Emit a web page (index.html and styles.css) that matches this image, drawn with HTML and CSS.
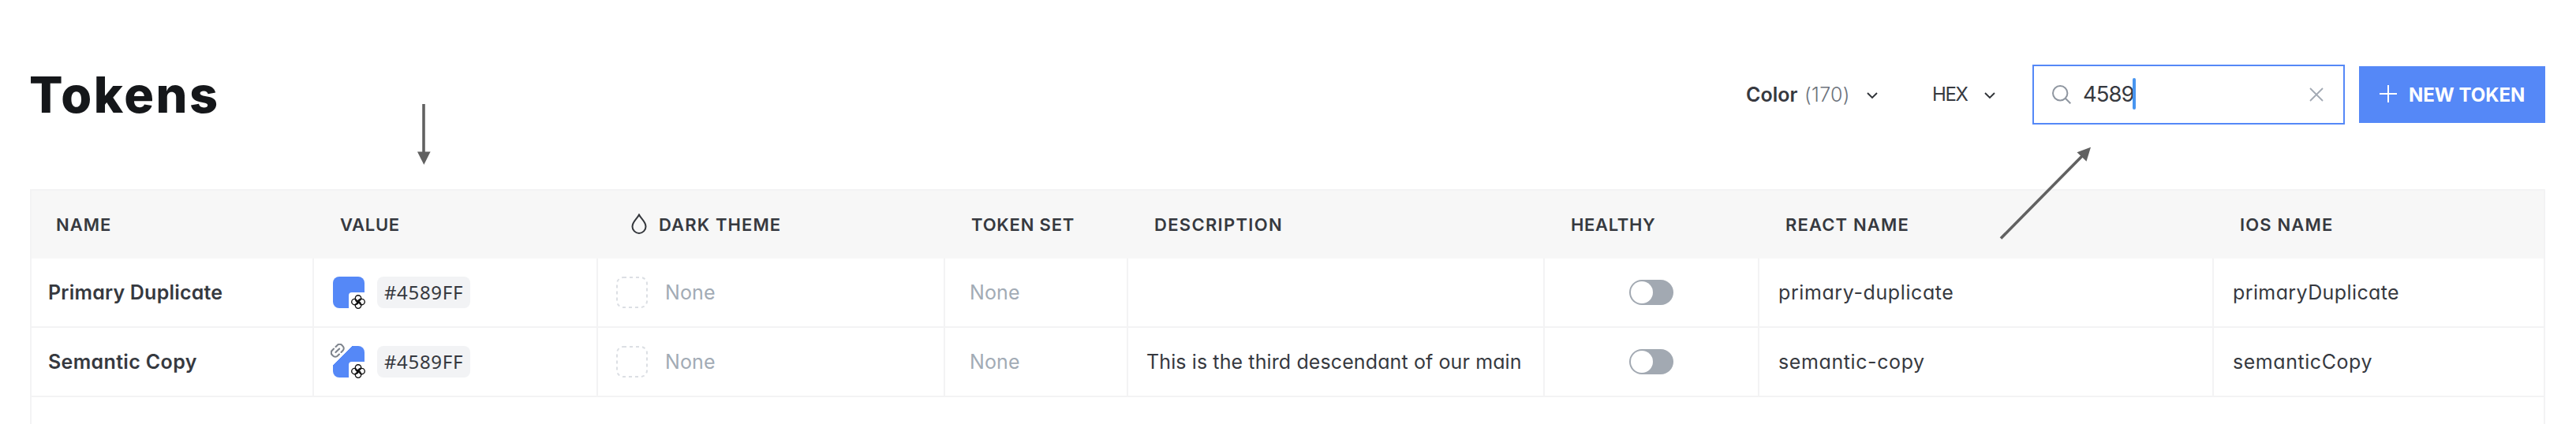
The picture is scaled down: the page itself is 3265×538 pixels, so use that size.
FILE: index.html
```html
<!DOCTYPE html>
<html lang="en">
<head>
<meta charset="utf-8">
<title>Tokens</title>
<link rel="stylesheet" href="styles.css">
</head>
<body>
<svg class="defs" width="0" height="0" aria-hidden="true">
  <symbol id="chevron" viewBox="0 0 16 10"><path d="M2 2 8 8l6-6" fill="none" stroke="#2f3237" stroke-width="1.900"/></symbol>
  <symbol id="flower" viewBox="0 0 18 18">
    <g fill="none" stroke="#111" stroke-width="1.350">
      <path id="petal" d="M10.500 10.300C7 9.500 5.200 7.200 5.300 4.400a3.700 3.700 0 0 1 7.400 0C12.700 6.300 11.200 7.300 9.500 7.700"/>
      <use href="#petal" transform="rotate(90 9 9)"/>
      <use href="#petal" transform="rotate(180 9 9)"/>
      <use href="#petal" transform="rotate(270 9 9)"/>
    </g>
  </symbol>
  <symbol id="none-box" viewBox="0 0 40 40"><rect x="1" y="1" width="38" height="38" rx="8" fill="none" stroke="#dcdfe4" stroke-width="2" stroke-dasharray="4 4"/></symbol>
</svg>

<main class="page">
  <header class="toolbar">
    <h1 class="title">Tokens</h1>
    <div class="select select-type"><b class="type">Color</b><span class="count">(170)</span><svg class="chevron"><use href="#chevron"/></svg></div>
    <div class="select select-format"><span class="format">HEX</span><svg class="chevron"><use href="#chevron"/></svg></div>
    <div class="search">
      <svg class="search-icon" viewBox="0 0 24 24"><g fill="none" stroke="#8f96a0" stroke-width="2"><circle cx="10.200" cy="10.200" r="9.200"/><path d="M16.800 16.800 23.300 23.300"/></g></svg>
      <span class="query">4589</span><i class="caret"></i>
      <svg class="clear" viewBox="0 0 18 18"><path d="M1 1 17 17M17 1 1 17" stroke="#a2a9b3" stroke-width="1.800"/></svg>
    </div>
    <div class="button">
      <svg class="plus" viewBox="0 0 22 22"><path d="M11 0v22M0 11h22" stroke="#fff" stroke-width="2"/></svg>
      <span>NEW TOKEN</span>
    </div>
  </header>

  <section class="table">
    <div class="row head">
      <div class="cell"><span class="h-name">NAME</span></div>
      <div class="cell"><span class="h-value">VALUE</span></div>
      <div class="cell dark"><svg class="drop" viewBox="0 0 20 26"><path d="M10 1.500C7.400 6.800 1.500 10.500 1.500 16.400a8.500 8.500 0 0 0 17 0C18.500 10.500 12.600 6.800 10 1.500Z" fill="none" stroke="#34373c" stroke-width="2"/></svg><span class="h-dark">DARK THEME</span></div>
      <div class="cell"><span class="h-set">TOKEN SET</span></div>
      <div class="cell"><span class="h-desc">DESCRIPTION</span></div>
      <div class="cell"><span class="h-healthy">HEALTHY</span></div>
      <div class="cell"><span class="h-react">REACT NAME</span></div>
      <div class="cell"><span class="h-ios">IOS NAME</span></div>
    </div>
    <div class="row">
      <div class="cell name"><span>Primary Duplicate</span></div>
      <div class="cell"><div class="swatch"><i class="notch"></i><svg class="flower"><use href="#flower"/></svg></div><span class="chip">#4589FF</span></div>
      <div class="cell"><svg class="none-box"><use href="#none-box"/></svg><span class="none">None</span></div>
      <div class="cell set"><span class="none">None</span></div>
      <div class="cell desc"></div>
      <div class="cell healthy"><span class="toggle"></span></div>
      <div class="cell react"><span>primary-duplicate</span></div>
      <div class="cell ios"><span>primaryDuplicate</span></div>
    </div>
    <div class="row">
      <div class="cell name copy"><span>Semantic Copy</span></div>
      <div class="cell"><div class="swatch linked"><i class="notch"></i><svg class="flower"><use href="#flower"/></svg>
        <svg class="link" viewBox="0 0 24 24"><g fill="none" stroke="#7d838c" stroke-width="2.800" stroke-linecap="round"><path d="m9 5.500 2.500-2.500a5.600 5.600 0 0 1 8.500 0l1 1a5.600 5.600 0 0 1 0 8.500L18.500 15"/><path d="M5.500 9 3 11.500a5.600 5.600 0 0 0 0 8.500l1 1a5.600 5.600 0 0 0 8.500 0L15 18.500"/><path d="m8.800 15.200 6.400-6.400"/></g></svg></div><span class="chip">#4589FF</span></div>
      <div class="cell"><svg class="none-box"><use href="#none-box"/></svg><span class="none">None</span></div>
      <div class="cell set"><span class="none">None</span></div>
      <div class="cell desc"><span>This is the third descendant of our main</span></div>
      <div class="cell healthy"><span class="toggle"></span></div>
      <div class="cell react copy"><span>semantic-copy</span></div>
      <div class="cell ios copy"><span>semanticCopy</span></div>
    </div>
  </section>
</main>

<svg class="annotations" viewBox="0 0 3265 538">
  <g stroke="#616161" fill="#616161">
    <path d="M537 132V194" stroke-width="3.600"/>
    <path d="M529 192.500h16.600L537.300 209Z" stroke="none"/>
    <path d="M2536 302.500 2641 196" stroke-width="3.600"/>
    <path d="M2632.500 193.300 2650 186.700 2644.500 204.700Z" stroke="none"/>
  </g>
</svg>
</body>
</html>
```
FILE: styles.css
```css
* { box-sizing: border-box; }

body {
  margin: 0;
  height: 538px;
  overflow: hidden;
  background: #fff;
  color: #36393f;
  font-family: Inter, "Liberation Sans", sans-serif;
  font-size: 25px;
  font-feature-settings: "cv11";
  white-space: nowrap;
}

.defs { position: absolute; }

svg, i { display: block; flex: none; }

.page {
  display: flex;
  flex-direction: column;
  height: 538px;
  padding: 0 39px 0 38px;
}

/* Toolbar */
.toolbar {
  display: flex;
  align-items: center;
  height: 240px;
}

.title {
  margin: 0 auto 0 -1px;
  color: #15171a;
  font-size: 63px;
  font-weight: 800;
  line-height: 80px;
  letter-spacing: 2.500px;
}

.select { display: flex; align-items: center; margin-top: -1px; }
.select-type { width: 236px; }
.select-format { width: 127px; }
.type { width: 74px; font-weight: 600; letter-spacing: 0; }
.count { width: 78px; color: #6d737c; font-weight: 300; letter-spacing: 0.300px; }
.format { width: 65px; font-size: 24px; font-weight: 400; letter-spacing: -1.400px; }
.chevron { width: 16px; height: 10px; margin-top: 3px; }

.search {
  display: flex;
  align-items: center;
  width: 396px;
  height: 76px;
  margin-right: 18px;
  padding: 0 25px 0 23px;
  border: 2px solid #5588f7;
}

.search-icon { width: 24px; height: 24px; }
.query { width: 63px; margin: -3px 0 0 15px; font-size: 27.500px; letter-spacing: -1px; line-height: 40px; }
.caret { width: 4px; height: 40px; border-radius: 2px; background: #4895f0; margin-top: -2px; }
.clear { width: 18px; height: 18px; margin-left: auto; }

.button {
  display: flex;
  align-items: center;
  width: 236px;
  height: 72px;
  padding-left: 26px;
  background: #5588f7;
  color: #fff;
  font-size: 24px;
  font-weight: 700;
}

.plus { width: 22px; height: 22px; margin: -2px 15px 0 0; }

/* Table */
.table {
  flex: 1;
  border: 2px solid #f3f3f4;
  border-bottom: 0;
}

.row {
  display: grid;
  grid-template-columns: 358px 360px 440px 232px 528px 272px 576px 418px;
  height: 88px;
  border-bottom: 2px solid #f3f3f4;
}

.cell {
  display: flex;
  align-items: center;
  min-width: 0;
  padding-left: 24px;
  border-right: 2px solid #f3f3f4;
}

.cell:last-child { border-right: 0; }
.cell > span:not(.toggle):not(.chip) { margin-top: -1px; }

.head {
  height: 86px;
  border: 0;
  background: #f7f7f7;
  font-size: 22px;
  font-weight: 600;
}

.head .cell { padding-left: 33px; border: 0; }
.head .cell:first-child { padding-left: 31px; }
.head .dark { padding-left: 42px; }
.drop { width: 20px; height: 26px; margin-right: 15px; margin-top: -2px; }

.h-name { letter-spacing: 1px; }
.h-value { letter-spacing: 0.700px; }
.h-dark { letter-spacing: 1.100px; }
.h-set { letter-spacing: 0.800px; }
.h-desc { letter-spacing: 1.300px; }
.h-healthy { letter-spacing: 0.650px; }
.h-react { letter-spacing: 1.150px; }
.h-ios { letter-spacing: 1.150px; }

.name { padding-left: 21px; font-weight: 600; letter-spacing: 0.200px; }
.name.copy { letter-spacing: 0.350px; }
.set { padding-left: 31px; }
.none { color: #a2abb5; letter-spacing: 0.100px; }
.desc { padding-left: 23px; letter-spacing: 0.110px; }
.healthy { justify-content: center; padding: 0; }
.react { letter-spacing: 0.600px; }
.ios { letter-spacing: 0.400px; }
.ios.copy { letter-spacing: 0.550px; }

.none-box { width: 40px; height: 40px; margin: 0 22px 0 -1px; }

.swatch {
  position: relative;
  width: 40px;
  height: 40px;
  margin-right: 16px;
  border-radius: 8px;
  background: #5588f7;
}

.swatch.linked { background: linear-gradient(135deg, transparent 30%, #5588f7 30.500%); }

.notch {
  position: absolute;
  right: 0;
  bottom: 0;
  width: 20px;
  height: 20px;
  border-top-left-radius: 4px;
  background: #fff;
}

.flower { position: absolute; left: 23px; top: 23px; width: 18px; height: 18px; }
.link { position: absolute; left: -3px; top: -3px; width: 17.500px; height: 17.500px; }

.chip {
  width: 118px;
  height: 40px;
  border-radius: 8px;
  background: #f2f3f5;
  font-family: "Noto Sans", sans-serif;
  font-size: 24px;
  line-height: 39px;
  letter-spacing: 0.700px;
  text-align: center;
}

.toggle {
  width: 56px;
  height: 32px;
  padding: 2px;
  border-radius: 16px;
  background: #a2a9b2;
}

.toggle::before {
  content: "";
  display: block;
  width: 28px;
  height: 28px;
  border-radius: 50%;
  background: #fff;
}

/* Arrows drawn over the page */
.annotations {
  position: absolute;
  inset: 0;
  width: 3265px;
  height: 538px;
  pointer-events: none;
}
```
